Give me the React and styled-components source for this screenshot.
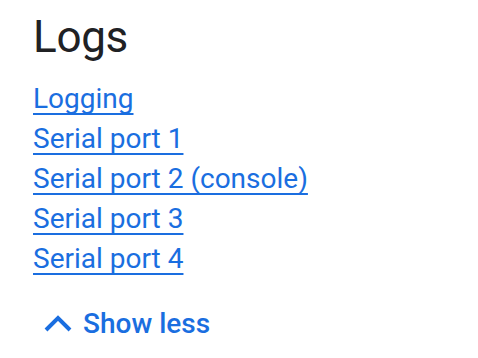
import React from "react";
import styled, { createGlobalStyle } from "styled-components";

const GlobalStyle = createGlobalStyle`
  body {
    margin: 0;
    background: #fff;
    font-family: Roboto, "Liberation Sans", sans-serif;
  }
`;

const Panel = styled.section`
  display: flex;
  flex-direction: column;
  align-items: flex-start;
  padding: 11px 0 0 33px;
`;

const Title = styled.h2`
  margin: 0 0 16px;
  font-size: 44px;
  line-height: 52px;
  font-weight: 400;
  color: #202124;
  letter-spacing: -0.3px;
`;

const LinkList = styled.ul`
  list-style: none;
  margin: 0;
  padding: 0;
  display: flex;
  flex-direction: column;
`;

const Item = styled.li`
  font-size: 28px;
  line-height: 40px;
`;

const Link = styled.a`
  color: #1a6ee0;
  text-decoration: underline;
  text-decoration-thickness: 2px;
  text-underline-offset: 5px;
  text-decoration-skip-ink: none;
  cursor: pointer;
`;

const ToggleButton = styled.button`
  display: flex;
  align-items: center;
  gap: 11px;
  margin-top: 24px;
  padding: 0 11px;
  height: 40px;
  border: none;
  background: none;
  color: #1a6ee0;
  font-family: Roboto, "Liberation Sans", sans-serif;
  font-size: 28px;
  font-weight: 500;
  cursor: pointer;
`;

const links = [
  "Logging",
  "Serial port 1",
  "Serial port 2 (console)",
  "Serial port 3",
  "Serial port 4",
];

const ChevronUp = () => (
  <svg width="28" height="18" viewBox="0 0 28 18">
    <polyline
      points="2,16 14,4 26,16"
      fill="none"
      stroke="currentColor"
      strokeWidth="4"
    />
  </svg>
);

const App = () => {
  return (
    <Panel>
      <GlobalStyle />
      <Title>Logs</Title>
      <LinkList>
        {links.map((label) => (
          <Item key={label}>
            <Link>{label}</Link>
          </Item>
        ))}
      </LinkList>
      <ToggleButton>
        <ChevronUp />
        Show less
      </ToggleButton>
    </Panel>
  );
};

export default App;
